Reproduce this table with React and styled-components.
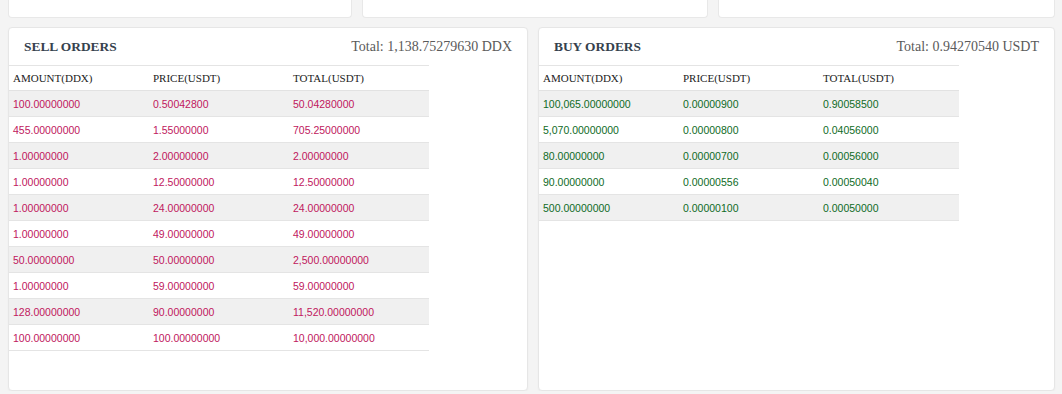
import React from "react";
import styled, { createGlobalStyle } from "styled-components";

const Global = createGlobalStyle`
  html, body { margin: 0; padding: 0; background: #f4f4f4; }
  body { font-family: "Liberation Serif", serif; }
`;

const Page = styled.div`
  padding: 0 7px 0 8px;
  display: flex;
  flex-direction: column;
  gap: 9px;
`;

const TopRow = styled.div`
  display: grid;
  grid-template-columns: 344px 346px 1fr;
  gap: 10px;
`;

const StubCard = styled.div`
  height: 18px;
  background: #fff;
  border: 1px solid #e8e8e8;
  border-top: none;
  border-radius: 0 0 4px 4px;
  box-sizing: border-box;
`;

const BottomRow = styled.div`
  display: grid;
  grid-template-columns: 520px 1fr;
  gap: 10px;
`;

const Card = styled.div`
  background: #fff;
  border: 1px solid #e6e6e6;
  border-radius: 4px;
  box-shadow: 0 1px 2px rgba(0, 0, 0, 0.04);
  padding-bottom: 39px;
  box-sizing: border-box;
`;

const CardHeader = styled.div`
  display: flex;
  align-items: center;
  justify-content: space-between;
  height: 37px;
  padding: 0 15px 0 15px;
`;

const Title = styled.h3`
  margin: 0;
  font-family: "Liberation Serif", serif;
  font-size: 13.4px;
  font-weight: bold;
  color: #35414d;
`;

const Total = styled.span`
  font-family: "Liberation Serif", serif;
  font-size: 14px;
  color: #5a5a5a;
`;

const Table = styled.table`
  width: 420px;
  border-collapse: collapse;
  border-top: 1px solid #e4e4e4;
  table-layout: fixed;
`;

const Th = styled.th`
  width: 140px;
  height: 25px;
  padding: 0 0 0 4px;
  text-align: left;
  font-family: "Liberation Serif", serif;
  font-size: 11px;
  font-weight: normal;
  color: #222;
  border-bottom: 1px solid #e2e2e2;
  box-sizing: border-box;
`;

const Tr = styled.tr`
  background: ${(p) => (p.$shade ? "#f0f0f0" : "#fff")};
`;

const Td = styled.td`
  height: 25px;
  padding: 0 0 0 4px;
  font-family: "Liberation Sans", sans-serif;
  font-size: 10.5px;
  color: ${(p) => (p.$side === "sell" ? "#c0175d" : "#0f6b26")};
  border-bottom: 1px solid #e4e4e4;
  white-space: nowrap;
`;

const sells = [
  ["100.00000000", "0.50042800", "50.04280000"],
  ["455.00000000", "1.55000000", "705.25000000"],
  ["1.00000000", "2.00000000", "2.00000000"],
  ["1.00000000", "12.50000000", "12.50000000"],
  ["1.00000000", "24.00000000", "24.00000000"],
  ["1.00000000", "49.00000000", "49.00000000"],
  ["50.00000000", "50.00000000", "2,500.00000000"],
  ["1.00000000", "59.00000000", "59.00000000"],
  ["128.00000000", "90.00000000", "11,520.00000000"],
  ["100.00000000", "100.00000000", "10,000.00000000"],
];

const buys = [
  ["100,065.00000000", "0.00000900", "0.90058500"],
  ["5,070.00000000", "0.00000800", "0.04056000"],
  ["80.00000000", "0.00000700", "0.00056000"],
  ["90.00000000", "0.00000556", "0.00050040"],
  ["500.00000000", "0.00000100", "0.00050000"],
];

function OrderCard({ title, total, rows, side }) {
  return (
    <Card>
      <CardHeader>
        <Title>{title}</Title>
        <Total>{total}</Total>
      </CardHeader>
      <Table>
        <thead>
          <tr>
            <Th>AMOUNT(DDX)</Th>
            <Th>PRICE(USDT)</Th>
            <Th>TOTAL(USDT)</Th>
          </tr>
        </thead>
        <tbody>
          {rows.map((r, i) => (
            <Tr key={i} $shade={i % 2 === 0}>
              {r.map((c, j) => (
                <Td key={j} $side={side}>
                  {c}
                </Td>
              ))}
            </Tr>
          ))}
        </tbody>
      </Table>
    </Card>
  );
}

export default function App() {
  return (
    <>
      <Global />
      <Page>
        <TopRow>
          <StubCard />
          <StubCard />
          <StubCard />
        </TopRow>
        <BottomRow>
          <OrderCard
            title="SELL ORDERS"
            total="Total: 1,138.75279630 DDX"
            rows={sells}
            side="sell"
          />
          <OrderCard
            title="BUY ORDERS"
            total="Total: 0.94270540 USDT"
            rows={buys}
            side="buy"
          />
        </BottomRow>
      </Page>
    </>
  );
}
